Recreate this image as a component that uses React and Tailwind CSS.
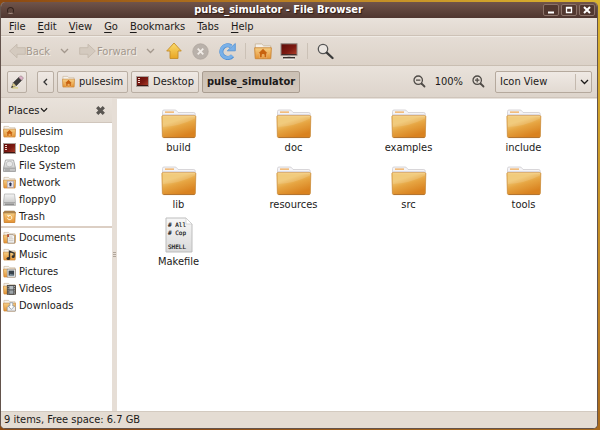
import React, { useState } from "react";

function Gradients() {
  return (
    <svg className="absolute h-0 w-0" aria-hidden="true">
      <defs>
        <linearGradient id="folderFront" x1="0" y1="0" x2="0.5" y2="1">
          <stop offset="0" stopColor="#f0c468" />
          <stop offset="0.35" stopColor="#efc46c" />
          <stop offset="0.6" stopColor="#e6a441" />
          <stop offset="1" stopColor="#d9821f" />
        </linearGradient>
        <linearGradient id="orange" x1="0" y1="0" x2="0" y2="1">
          <stop offset="0" stopColor="#f6cf85" />
          <stop offset="1" stopColor="#e59233" />
        </linearGradient>
        <linearGradient id="gold" x1="0" y1="0" x2="0" y2="1">
          <stop offset="0" stopColor="#fbdc6e" />
          <stop offset="1" stopColor="#e8a524" />
        </linearGradient>
        <linearGradient id="screen" x1="0" y1="0" x2="1" y2="1">
          <stop offset="0" stopColor="#5c0b08" />
          <stop offset="0.55" stopColor="#7d1a12" />
          <stop offset="1" stopColor="#b4442c" />
        </linearGradient>
        <linearGradient id="paper" x1="0" y1="0" x2="0" y2="1">
          <stop offset="0" stopColor="#f7f7f7" />
          <stop offset="1" stopColor="#dadada" />
        </linearGradient>
        <linearGradient id="metal" x1="0" y1="0" x2="0" y2="1">
          <stop offset="0" stopColor="#f4f4f4" />
          <stop offset="1" stopColor="#bdbdbd" />
        </linearGradient>
      </defs>
    </svg>
  );
}

const Folder = () => (
  <svg width="36" height="30" viewBox="0 0 36 30" aria-hidden="true">
    <path d="M1.500 27V2.500Q1.500 1 3 1H14q1.300 0 2 1.200L17 3.500h15.800Q34.200 3.500 34.200 5V27z" fill="#f4f3f6" stroke="#cfcdd1" strokeWidth=".8" />
    <path d="M4 3.200h9" stroke="#f0aa55" strokeWidth="1.300" />
    <path d="M2 5.500h31.500" stroke="#dddbe2" strokeWidth="1" />
    <path d="M.9 7.500Q.9 6.700 1.800 6.700H33.900Q34.800 6.700 34.800 7.500L34.300 27.500Q34.200 28.600 33 28.600H2.700Q1.500 28.600 1.400 27.500z" fill="url(#folderFront)" stroke="#cf9240" strokeWidth=".8" />
    <path d="M1.800 7.600H34" stroke="#f6d694" strokeWidth=".8" />
    <path d="M1.800 8v10Q18 17.500 34 9.500V8z" fill="#fff" opacity=".12" />
    <path d="M2.500 28.500h31" stroke="#b0712c" strokeWidth=".9" />
  </svg>
);

const TextFile = () => (
  <svg width="28" height="36" viewBox="0 0 28 36" aria-hidden="true">
    <path d="M1 1h20l6 6v28H1z" fill="url(#paper)" stroke="#bdbdbd" />
    <path d="M21 1v6h6z" fill="#fff" stroke="#c8c8c8" strokeWidth=".7" />
    <g fontFamily="'DejaVu Sans Mono', monospace" fontSize="6" fill="#111" stroke="#111" strokeWidth=".15">
      <text x="3" y="10">{"# All"}</text>
      <text x="3" y="18">{"# Cop"}</text>
      <text x="3" y="32">SHELL</text>
    </g>
  </svg>
);

function SmallFolder({ children, size = 13 }) {
  return (
    <svg width={size} height={size} viewBox="0 0 14 14" aria-hidden="true">
      <path d="M1 12V1.500h5L7.500 3H13v9z" fill="#f4f1ec" stroke="#c9b79c" strokeWidth=".7" />
      <path d="M.5 4.500h13L13 13H1z" fill="url(#orange)" stroke="#cb8638" strokeWidth=".7" />
      {children}
    </svg>
  );
}

const HomeFolder = ({ size = 13 }) => (
  <SmallFolder size={size}>
    <path d="M7 5L3 9h1.300v3.200h2V9.800h1.600v2.400h1.900V9H11z" fill="#c8620f" stroke="#f8ce8d" strokeWidth=".4" />
  </SmallFolder>
);
const DesktopSmall = () => (
  <svg width="13" height="13" viewBox="0 0 13 13" aria-hidden="true">
    <rect x=".5" y="1.500" width="12" height="10" fill="url(#screen)" stroke="#aaa09a" />
    <path d="M2 3.500h2M2 5.500h2M2 7.500h2" stroke="#f3d4c8" />
    <path d="M1 10.500h11" stroke="#3d1712" />
  </svg>
);
const Drive = () => (
  <svg width="13" height="13" viewBox="0 0 13 13" aria-hidden="true">
    <path d="M2.500 1h8L12.500 9v3.500H.5V9z" fill="url(#metal)" stroke="#999" strokeWidth=".8" />
    <ellipse cx="6.500" cy="5" rx="3.300" ry="2.800" fill="#e8e8e8" stroke="#aaa" strokeWidth=".6" />
    <path d="M1 9.200h11M2 11h5" stroke="#888" strokeWidth=".7" />
  </svg>
);
const Floppy = () => (
  <svg width="13" height="13" viewBox="0 0 13 13" aria-hidden="true">
    <path d="M1.500 1h10l1 8v3.500H.5V9z" fill="url(#metal)" stroke="#b4b4b4" strokeWidth=".8" />
    <path d="M1 9.500h11" stroke="#999" strokeWidth=".7" />
    <path d="M2 11.200h9" stroke="#777" />
  </svg>
);
const NetworkFolder = () => (
  <SmallFolder>
    <rect x="4.500" y="5.500" width="7" height="7" fill="#e9e6ee" stroke="#9a93a8" strokeWidth=".6" />
    <path d="M8 6.800L10 9H9v2H7V9H6z" fill="#29304d" />
  </SmallFolder>
);
const TrashIcon = () => (
  <svg width="13" height="13" viewBox="0 0 13 13" aria-hidden="true">
    <path d="M.7 2.500h11.600L11.800 12.500H1.200z" fill="url(#orange)" stroke="#c87a22" strokeWidth=".8" />
    <path d="M1.500 1h10l1 2H.5z" fill="#b78a50" stroke="#8f6a3c" strokeWidth=".5" />
    <path d="M4.500 8a2.200 2.200 0 1 0 1-2.300M4.200 5.300l1.500.3-.5 1.400" stroke="#fff3d8" fill="none" />
  </svg>
);
const DocumentsFolder = () => (
  <SmallFolder>
    <path d="M5 4h6l1.500 1.500V13H5z" fill="#fafafa" stroke="#8f8579" strokeWidth=".8" />
    <path d="M6.300 6.500h4M6.300 8.500h5M6.300 10.500h5" stroke="#aaa49b" strokeWidth=".7" />
    <path d="M4.500 3.500h2v3h-2z" fill="#b55336" />
  </SmallFolder>
);
const MusicFolder = () => (
  <SmallFolder>
    <path d="M7 11V3.500l5 2v3.300" stroke="#30302f" strokeWidth="1.500" fill="none" />
    <ellipse cx="5.800" cy="11.300" rx="2" ry="1.700" fill="#30302f" />
    <ellipse cx="11" cy="9.300" rx="1.700" ry="1.400" fill="#30302f" />
  </SmallFolder>
);
const PicturesFolder = () => (
  <SmallFolder>
    <rect x="4.500" y="4.500" width="9" height="8.500" fill="#efefef" stroke="#8c8c8c" strokeWidth=".7" />
    <rect x="6" y="6" width="6" height="5.500" fill="#39434b" />
    <path d="M6 11.500l2.300-2 1.500 1 1-.7 1.200 1.700z" fill="#7f929f" />
  </SmallFolder>
);
const VideosFolder = () => (
  <SmallFolder>
    <rect x="4.500" y="3.500" width="9" height="10" fill="#4a4a4a" stroke="#333" strokeWidth=".6" />
    <rect x="6.800" y="4.300" width="4.400" height="3.700" fill="#b4bbc0" />
    <rect x="6.800" y="9" width="4.400" height="3.700" fill="#9da5aa" />
    <path d="M5.600 4.300v9M12.400 4.300v9" stroke="#ddd" strokeWidth=".8" strokeDasharray="1 1" />
  </SmallFolder>
);
const DownloadsFolder = () => (
  <SmallFolder>
    <path d="M4.500 8.500V13h9V8.500" fill="#ececec" stroke="#96918b" strokeWidth=".8" />
    <path d="M7.500 4h3v3.500h2L9 11.300 5.500 7.500h2z" fill="#fff" stroke="#8397ad" strokeWidth=".8" />
  </SmallFolder>
);

const Chevron = ({ width = 9 }) => (
  <svg width={width} height="6" viewBox="0 0 9 6" fill="none" stroke="currentColor" strokeWidth="1.300" aria-hidden="true">
    <path d="M1 1l3.500 3.500L8 1" />
  </svg>
);
const ArrowLeft = () => (
  <svg width="17" height="16" viewBox="0 0 17 16" aria-hidden="true">
    <path d="M.7 8L8 1.200v3.500h8.300v6.600H8v3.500z" fill="#d4cabf" stroke="#c5baae" strokeWidth=".9" />
  </svg>
);
const ArrowRight = () => (
  <svg width="17" height="16" viewBox="0 0 17 16" aria-hidden="true">
    <path d="M16.300 8L9 1.200v3.500H.7v6.600H9v3.500z" fill="#d4cabf" stroke="#c5baae" strokeWidth=".9" />
  </svg>
);
const ArrowUp = () => (
  <svg width="16" height="18" viewBox="0 0 16 18" aria-hidden="true">
    <path d="M8 1L15.300 9H12v7.500H4V9H.7z" fill="url(#gold)" stroke="#c68f2a" strokeWidth=".9" strokeLinejoin="round" />
  </svg>
);
const StopIcon = () => (
  <svg width="17" height="17" viewBox="0 0 17 17" aria-hidden="true">
    <circle cx="8.500" cy="8.500" r="7.700" fill="#b9b1aa" stroke="#aea69e" strokeWidth=".8" />
    <path d="M5.700 5.700l5.600 5.600M11.300 5.700l-5.600 5.600" stroke="#f1ece7" strokeWidth="1.800" />
  </svg>
);
const ReloadIcon = () => (
  <svg width="17" height="18" viewBox="0 0 17 18" aria-hidden="true">
    <path d="M13.500 13.800A6.300 6.300 0 1 1 12 4.300" stroke="#4f8fd3" strokeWidth="4.200" fill="none" />
    <path d="M16.300 1.500v7.300H8.300z" fill="#79b0e8" stroke="#4f8fd3" strokeWidth=".8" />
    <path d="M13.200 13.500A6.300 6.300 0 1 1 12.300 4.500" stroke="#79b0e8" strokeWidth="3" fill="none" />
  </svg>
);
const MonitorIcon = () => (
  <svg width="18" height="17" viewBox="0 0 18 17" aria-hidden="true">
    <rect x="1" y=".8" width="16" height="11.400" fill="url(#screen)" stroke="#8d8580" strokeWidth="1" />
    <path d="M1.500 11.500h15" stroke="#2e2624" strokeWidth=".8" />
    <path d="M7.500 12.700h3V14h-3z" fill="#bdb8b3" />
    <path d="M3 14.800h12" stroke="#39312e" strokeWidth="1.500" />
    <path d="M3.500 16.200h11" stroke="#fff" strokeWidth=".8" />
  </svg>
);
const SearchIcon = () => (
  <svg width="17" height="17" viewBox="0 0 17 17" fill="none" aria-hidden="true">
    <circle cx="6" cy="6" r="4.700" fill="#ebe6e1" stroke="#555" strokeWidth="1.300" />
    <path d="M9.700 9.700l5.800 5.300" stroke="#3b3b3b" strokeWidth="2.300" strokeLinecap="round" />
  </svg>
);
const ZoomIcon = ({ plus }) => (
  <svg width="13" height="13" viewBox="0 0 13 13" fill="none" stroke="#4f4b47" aria-hidden="true">
    <circle cx="5.200" cy="5.200" r="4.200" strokeWidth="1.300" />
    <path d="M8.500 8.500l3 3" strokeWidth="1.800" strokeLinecap="round" />
    <path d={plus ? "M3 5.200h4.400M5.200 3v4.400" : "M3 5.200h4.400"} strokeWidth="1.200" />
  </svg>
);
const PencilIcon = () => (
  <svg width="14" height="14" viewBox="0 0 14 14" aria-hidden="true">
    <path d="M2 12.800h6" stroke="#d6cd77" strokeWidth="1.200" />
    <path d="M3.300 7.700L8.800 2.500l2.800 2.800L6.200 10.700z" fill="#3e3c3b" stroke="#222" strokeWidth=".6" />
    <path d="M8.800 2.500l1.500-1.300q.7-.6 1.400 0l1.200 1.200q.6.700 0 1.400l-1.300 1.500z" fill="#ddb2c8" stroke="#8e737c" strokeWidth=".6" />
    <path d="M3.300 7.700L1.300 12.700 6.200 10.700z" fill="#e2cf8a" stroke="#665" strokeWidth=".5" />
    <path d="M1.300 12.700l.8-1.900 1.200 1.100z" fill="#222" />
  </svg>
);
const CloseThick = () => (
  <svg width="11" height="11" viewBox="0 0 11 11" aria-hidden="true">
    <path d="M2.200 2.200l6.600 6.600M8.800 2.200L2.200 8.800" stroke="#5a5652" strokeWidth="3.200" />
  </svg>
);

const menus = ["File", "Edit", "View", "Go", "Bookmarks", "Tabs", "Help"];
const places = [
  ["pulsesim", HomeFolder],
  ["Desktop", DesktopSmall],
  ["File System", Drive],
  ["Network", NetworkFolder],
  ["floppy0", Floppy],
  ["Trash", TrashIcon],
];
const bookmarks = [
  ["Documents", DocumentsFolder],
  ["Music", MusicFolder],
  ["Pictures", PicturesFolder],
  ["Videos", VideosFolder],
  ["Downloads", DownloadsFolder],
];
const files = ["build", "doc", "examples", "include", "lib", "resources", "src", "tools", "Makefile"];

const winButton =
  "flex h-3 w-4 items-center justify-center rounded-[2px] border border-[#8b7268] bg-[#51372f] text-white";
const pathButton =
  "flex h-[22px] items-center justify-center rounded-[2px] border border-[#b9aea3] bg-linear-to-b from-[#efe9e4] to-[#e2dad2]";

function PlaceList({ items }) {
  return (
    <ul>
      {items.map(([name, Icon]) => (
        <li key={name}>
          <button className="flex h-[17px] w-full items-center gap-[3px] pl-[2px] text-left">
            <Icon />
            {name}
          </button>
        </li>
      ))}
    </ul>
  );
}

export default function App() {
  const [view, setView] = useState("Icon View");
  return (
    <div className="flex min-h-screen flex-col bg-[#8d4a12] bg-[radial-gradient(circle_at_top_right,#dcb52f,#b87c22_45%,#8d4a12_80%)] pt-[2px] pr-[2px] pb-px font-['DejaVu_Sans_Condensed','DejaVu_Sans',sans-serif] text-[11px] leading-[17px] text-[#1c1a19]">
      <Gradients />
      <div className="flex flex-1 flex-col overflow-hidden rounded-[5px] border-x border-b border-[#63534c] bg-[#e4dcd3]">
        <header className="flex h-4 items-center bg-linear-to-b from-[#70544a] to-[#4f362f] pr-[2px] pl-[6px]">
          <button aria-label="Window menu" className="h-[7px] w-[7px] rounded-full border border-[#35231d] border-b-[#a58d83] bg-[#5d443b]" />
          <h1 className="flex-1 text-center leading-4 font-bold text-white [text-shadow:1px_1px_1px_#2c1b16]">pulse_simulator - File Browser</h1>
          <div className="flex gap-[2px]">
            <button aria-label="Minimize" className={winButton}>
              <svg width="8" height="8" viewBox="0 0 8 8"><path d="M1 6.500h6" stroke="#fff" strokeWidth="2" /></svg>
            </button>
            <button aria-label="Maximize" className={winButton}>
              <svg width="8" height="8" viewBox="0 0 8 8"><path d="M1.500 1.500h5v5h-5zM1 2h6" fill="none" stroke="#fff" strokeWidth="1.300" /></svg>
            </button>
            <button aria-label="Close" className={winButton}>
              <svg width="8" height="8" viewBox="0 0 8 8"><path d="M1 1l6 6M7 1L1 7" stroke="#fff" strokeWidth="2" /></svg>
            </button>
          </div>
        </header>

        <nav className="flex h-[18px] items-center gap-3 border-b border-[#cdc2b7] bg-linear-to-b from-[#e9e2db] to-[#e0d7ce] px-2">
          {menus.map((m) => (
            <button key={m}>
              <span className="underline underline-offset-2">{m[0]}</span>
              {m.slice(1)}
            </button>
          ))}
        </nav>

        <div className="flex h-[30px] items-center border-y border-t-[#f0ebe5] border-b-[#c9beb2] bg-linear-to-b from-[#e5ddd5] to-[#dcd2c8] px-2 text-[#a3988d]">
          <button disabled className="flex items-center [text-shadow:1px_1px_0_#f3eee9]"><ArrowLeft />Back</button>
          <button disabled aria-label="Back history" className="ml-[10px]"><Chevron /></button>
          <button disabled className="ml-[10px] flex items-center gap-px [text-shadow:1px_1px_0_#f3eee9]"><ArrowRight />Forward</button>
          <button disabled aria-label="Forward history" className="ml-[9px]"><Chevron /></button>
          <button aria-label="Up" className="ml-[11px]"><ArrowUp /></button>
          <button aria-label="Stop" disabled className="ml-[10px]"><StopIcon /></button>
          <button aria-label="Reload" className="ml-[10px]"><ReloadIcon /></button>
          <span className="ml-[9px] h-4 w-px bg-[#cbc1b6]" />
          <button aria-label="Home" className="ml-2"><HomeFolder size={18} /></button>
          <button aria-label="Computer" className="ml-2"><MonitorIcon /></button>
          <span className="ml-[9px] h-4 w-px bg-[#cbc1b6]" />
          <button aria-label="Search" className="ml-[9px]"><SearchIcon /></button>
        </div>

        <div className="flex h-8 items-center border-b border-[#cfc5bb] bg-linear-to-b from-[#e9e2db] to-[#ddd4cb] pr-[5px] pl-[6px]">
          <button aria-label="Edit location" className={`${pathButton} w-5`}><PencilIcon /></button>
          <div className="ml-[10px] flex gap-[3px]">
            <button aria-label="Scroll path left" className={`${pathButton} w-[17px]`}>
              <svg width="5" height="8" viewBox="0 0 5 8" fill="none" stroke="#333" strokeWidth="1.300"><path d="M4 1L1 4l3 3" /></svg>
            </button>
            <button className={`${pathButton} gap-1 px-1`}><HomeFolder />pulsesim</button>
            <button className={`${pathButton} gap-1 px-1`}><DesktopSmall />Desktop</button>
            <button className="flex h-[22px] items-center rounded-[2px] border border-[#a99d91] bg-linear-to-b from-[#cbc0b4] to-[#d3c8bd] px-1 font-bold">pulse_simulator</button>
          </div>
          <div className="ml-auto flex items-center gap-[9px]">
            <button aria-label="Zoom out"><ZoomIcon /></button>
            <span>100%</span>
            <button aria-label="Zoom in"><ZoomIcon plus /></button>
          </div>
          <div className="relative ml-[10px]">
            <select
              aria-label="View as"
              value={view}
              onChange={(e) => setView(e.target.value)}
              className="block h-[22px] w-[97px] appearance-none rounded-[2px] border border-[#b5a99d] bg-linear-to-b from-[#efe9e4] to-[#e2dad2] pl-1"
            >
              <option>Icon View</option>
              <option>List View</option>
              <option>Compact View</option>
            </select>
            <span className="pointer-events-none absolute inset-y-[3px] right-0 flex w-[17px] items-center justify-center border-l border-[#c4b9ae]">
              <Chevron />
            </span>
          </div>
        </div>

        <main className="flex flex-1">
          <aside className="w-[111px] bg-white">
            <div className="flex h-[25px] items-center justify-between border-b border-[#d0c6bc] bg-linear-to-b from-[#e9e2db] to-[#e2dad1] pr-[6px] pl-[7px]">
              <button className="flex items-center gap-px">Places<Chevron width={8} /></button>
              <button aria-label="Close side pane"><CloseThick /></button>
            </div>
            <PlaceList items={places} />
            <hr className="my-px border-t-2 border-[#dccfc4]" />
            <PlaceList items={bookmarks} />
          </aside>
          <div className="flex w-[5px] items-center justify-center bg-[#e6ded6]">
            <span className="flex flex-col gap-px">
              <i className="h-px w-[3px] bg-[#b0a59a]" />
              <i className="h-px w-[3px] bg-[#b0a59a]" />
              <i className="h-px w-[3px] bg-[#b0a59a]" />
            </span>
          </div>
          <section aria-label="Folder contents" className="grid flex-1 auto-rows-[57px] grid-cols-[repeat(auto-fill,115px)] border-t border-[#e8e2dc] bg-white pl-1">
            {files.map((f) => (
              <button key={f} className="flex flex-col items-center justify-end">
                {f === "Makefile" ? <TextFile /> : <Folder />}
                {f}
              </button>
            ))}
          </section>
        </main>

        <footer className="h-[17px] border-t border-[#d3cac0] bg-[#e4dcd3] pl-[3px] leading-4">9 items, Free space: 6.7 GB</footer>
      </div>
    </div>
  );
}
